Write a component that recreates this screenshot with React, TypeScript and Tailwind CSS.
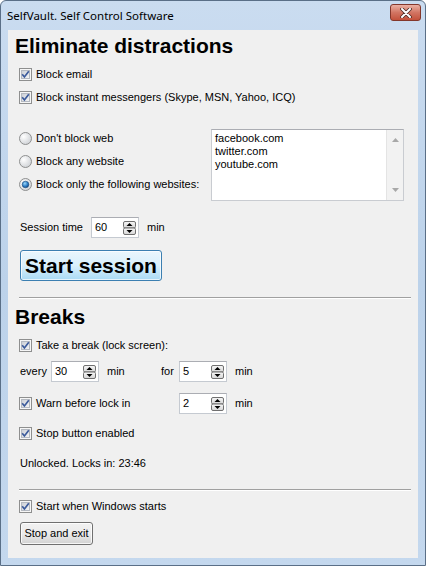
import React from "react";

const body = { fontFamily: '"Liberation Sans", Arial, sans-serif' };
const heading = { fontFamily: '"Liberation Sans", Arial, sans-serif' };

function CheckBox() {
  return (
    <svg width="13" height="13" viewBox="0 0 13 13" className="shrink-0">
      <defs>
        <linearGradient id="cbg" x1="0" y1="0" x2="1" y2="1">
          <stop offset="0" stopColor="#c9cdd4" />
          <stop offset="1" stopColor="#f7f7f7" />
        </linearGradient>
      </defs>
      <rect x="0.5" y="0.5" width="12" height="12" fill="#f6f6f6" stroke="#8e8f8f" />
      <rect x="2.5" y="2.5" width="8" height="8" fill="url(#cbg)" stroke="#b4b9c1" />
      <path d="M3.2 6.3 L5.4 9 L9.8 3.3" stroke="#3b5a9b" strokeWidth="1.7" fill="none" />
    </svg>
  );
}

function Radio({ on }: { on?: boolean }) {
  return (
    <svg width="13" height="13" viewBox="0 0 13 13" className="shrink-0">
      <defs>
        <radialGradient id="rbg" cx="0.35" cy="0.35" r="0.7">
          <stop offset="0" stopColor="#ffffff" />
          <stop offset="1" stopColor="#cfd2d6" />
        </radialGradient>
        <radialGradient id="rdot" cx="0.4" cy="0.35" r="0.7">
          <stop offset="0" stopColor="#9ad8fb" />
          <stop offset="0.6" stopColor="#2b7bc4" />
          <stop offset="1" stopColor="#0c3f78" />
        </radialGradient>
      </defs>
      <circle cx="6.5" cy="6.5" r="6" fill="url(#rbg)" stroke="#8e8f8f" />
      {on && <circle cx="6.5" cy="6.5" r="3.3" fill="url(#rdot)" stroke="#1d4b7c" strokeWidth="0.6" />}
    </svg>
  );
}

function Check({ label, className = "" }: { label: string; className?: string }) {
  return (
    <div className={"flex items-center h-[17px] gap-[4px] ml-[11px] " + className}>
      <CheckBox />
      <span>{label}</span>
    </div>
  );
}

function Spinner({ value }: { value: string }) {
  return (
    <div className="w-[48px] h-[21px] bg-white border border-[#c5cad1] border-t-[#abadb3] flex items-center justify-between pl-[3px] pr-[2px] shrink-0">
      <span>{value}</span>
      <svg width="13" height="14" viewBox="0 0 13 14">
        <defs>
          <linearGradient id="sbg" x1="0" y1="0" x2="0" y2="1">
            <stop offset="0" stopColor="#f7f7f7" />
            <stop offset="1" stopColor="#d6d6d6" />
          </linearGradient>
        </defs>
        <rect x="0.5" y="0.5" width="12" height="6.5" rx="1.5" fill="url(#sbg)" stroke="#707070" />
        <rect x="0.5" y="7" width="12" height="6.5" rx="1.5" fill="url(#sbg)" stroke="#707070" />
        <path d="M3.5 5 L6.5 2 L9.5 5Z" fill="#000" />
        <path d="M3.5 9 L6.5 12 L9.5 9Z" fill="#000" />
      </svg>
    </div>
  );
}

function Separator({ className = "" }: { className?: string }) {
  return <div className={"ml-[11px] mr-[7px] border-t border-[#a0a0a0] border-b border-b-white " + className} />;
}

export default function App() {
  return (
    <div
      className="w-[426px] h-[566px] flex flex-col border border-[#5a6f87] rounded-t-[6px] bg-gradient-to-b from-[#cadcf0] via-[#bcd2ea] to-[#c4d8ee] text-[11px] text-black"
      style={body}
    >
      <div className="h-[29px] flex items-start justify-between shrink-0">
        <span
          className="pl-[6px] pt-[6px] text-[11.5px] text-black"
          style={{ fontFamily: '"Noto Sans", "Open Sans", sans-serif' }}
        >
          SelfVault. Self Control Software
        </span>
        <div className="mt-[3px] mr-[4px] w-[31px] h-[17px] rounded-[3px] border border-[#83372b] bg-gradient-to-b from-[#eab0a3] via-[#d27563] to-[#c3513b] flex items-center justify-center">
          <svg width="12" height="10" viewBox="0 0 12 10">
            <path d="M2 1 L10 9 M10 1 L2 9" stroke="#4a2a25" strokeWidth="3.6" strokeLinecap="round" />
            <path d="M2 1 L10 9 M10 1 L2 9" stroke="#ffffff" strokeWidth="2" strokeLinecap="round" />
          </svg>
        </div>
      </div>

      <div className="mx-[7px] mb-[7px] flex-1 bg-[#f0f0f0] flex flex-col">
        <h1 className="mt-[4px] ml-[7px] h-[24px] leading-[24px] text-[21px] font-bold" style={heading}>
          Eliminate distractions
        </h1>
        <Check label="Block email" className="mt-[8px]" />
        <Check label="Block instant messengers (Skype, MSN, Yahoo, ICQ)" className="mt-[6px]" />

        <div className="mt-[23px] ml-[11px] flex">
          <div className="w-[192px] pt-[1px] flex flex-col gap-[6px]">
            <div className="flex items-center h-[17px] gap-[4px]">
              <Radio />
              <span>Don't block web</span>
            </div>
            <div className="flex items-center h-[17px] gap-[4px]">
              <Radio />
              <span>Block any website</span>
            </div>
            <div className="flex items-center h-[17px] gap-[4px]">
              <Radio on />
              <span>Block only the following websites:</span>
            </div>
          </div>
          <div className="w-[193px] h-[72px] bg-white border border-[#c9ccd1] border-t-[#abadb3] flex">
            <div className="flex-1 pl-[3px] pt-[2px] leading-[13px]">
              <div>facebook.com</div>
              <div>twitter.com</div>
              <div>youtube.com</div>
            </div>
            <div className="w-[17px] bg-[#f2f2f2] border-l border-[#e4e4e4] flex flex-col justify-between items-center py-[8px]">
              <svg width="7" height="4" viewBox="0 0 7 4">
                <path d="M0 4 L3.5 0 L7 4Z" fill="#a8a8a8" />
              </svg>
              <svg width="7" height="4" viewBox="0 0 7 4">
                <path d="M0 0 L3.5 4 L7 0Z" fill="#a8a8a8" />
              </svg>
            </div>
          </div>
        </div>

        <div className="mt-[16px] ml-[12px] flex items-center h-[21px]">
          <span className="w-[71px]">Session time</span>
          <Spinner value="60" />
          <span className="ml-[8px]">min</span>
        </div>

        <button
          className="mt-[12px] ml-[12px] w-[142px] h-[31px] rounded-[3px] border border-[#3c7fb1] bg-gradient-to-b from-[#eaf6fd] via-[#d9f0fc] to-[#a9daf5] text-[21px] font-bold leading-none shadow-[inset_0_0_0_1px_rgba(255,255,255,0.7)]"
          style={heading}
        >
          Start session
        </button>

        <Separator className="mt-[16px]" />

        <h2 className="mt-[6px] ml-[7px] h-[24px] leading-[24px] text-[21px] font-bold" style={heading}>
          Breaks
        </h2>
        <Check label="Take a break (lock screen):" className="mt-[8px]" />

        <div className="mt-[7px] ml-[12px] flex items-center h-[21px]">
          <span className="w-[31px]">every</span>
          <Spinner value="30" />
          <span className="ml-[8px] w-[54px]">min</span>
          <span className="w-[18px]">for</span>
          <Spinner value="5" />
          <span className="ml-[8px]">min</span>
        </div>

        <div className="mt-[11px] ml-[11px] flex items-center h-[21px]">
          <div className="w-[160px] flex items-center gap-[4px]">
            <CheckBox />
            <span>Warn before lock in</span>
          </div>
          <Spinner value="2" />
          <span className="ml-[8px]">min</span>
        </div>

        <Check label="Stop button enabled" className="mt-[11px]" />

        <div className="mt-[15px] ml-[12px] leading-[13px]">Unlocked. Locks in: 23:46</div>

        <Separator className="mt-[19px]" />

        <Check label="Start when Windows starts" className="mt-[7px]" />

        <button className="mt-[7px] ml-[12px] w-[73px] h-[23px] rounded-[3px] border border-[#707070] bg-gradient-to-b from-[#f2f2f2] via-[#ebebeb] to-[#d2d2d2] text-[11px] shadow-[inset_0_0_0_1px_rgba(255,255,255,0.8)]">
          Stop and exit
        </button>
      </div>
    </div>
  );
}
